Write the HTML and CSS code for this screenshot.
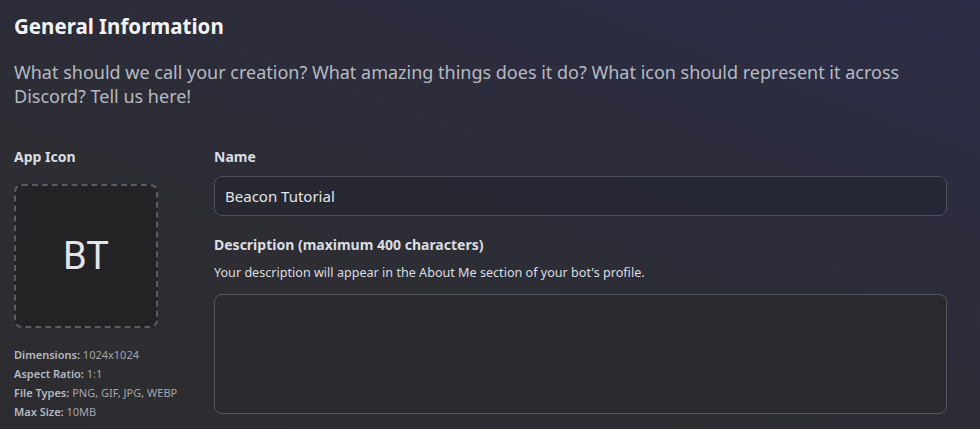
FILE: index.html
```html
<!DOCTYPE html>
<html lang="en">
<head>
    <meta charset="UTF-8">
    <meta name="viewport" content="width=device-width, initial-scale=1.0">
    <title>General Information</title>
    <link rel="stylesheet" href="styles.css">
</head>
<body>
    <div class="page">
        <h1>General Information</h1>
        <p class="intro">What should we call your creation? What amazing things does it do? What icon should represent it across Discord? Tell us here!</p>

        <div class="form-row">
            <!-- App icon column -->
            <div class="icon-col">
                <label class="field-label icon-label">App Icon</label>
                <div class="icon-box">BT</div>
                <ul class="icon-specs">
                    <li><b>Dimensions:</b> 1024x1024</li>
                    <li><b>Aspect Ratio:</b> 1:1</li>
                    <li><b>File Types:</b> PNG, GIF, JPG, WEBP</li>
                    <li><b>Max Size:</b> 10MB</li>
                </ul>
            </div>

            <!-- Name / description column -->
            <div class="fields-col">
                <label class="field-label" for="name">Name</label>
                <input type="text" id="name" class="text-input" value="Beacon Tutorial">

                <label class="field-label desc-label" for="description">Description (maximum 400 characters)</label>
                <p class="hint">Your description will appear in the About Me section of your bot's profile.</p>
                <textarea id="description" class="text-area"></textarea>
            </div>
        </div>
    </div>
</body>
</html>
```
FILE: styles.css
```css
html, body {
    height: 100%;
}
body {
    margin: 0;
    font-family: "Noto Sans", "Open Sans", sans-serif;
    background: linear-gradient(200deg, #2c2c48 0%, #2c2c3c 35%, #2d2d33 65%, #2c2c30 100%);
    color: #dbdee1;
    overflow: hidden;
}
.page {
    padding: 10px 33px 0 14px;
}
h1 {
    margin: 0;
    font-size: 20.5px;
    line-height: 32px;
    font-weight: 700;
    color: #f2f3f5;
}
.intro {
    margin: 18px 0 0;
    font-size: 18px;
    line-height: 24px;
    color: #b5bac1;
}
.form-row {
    display: flex;
    gap: 56px;
    margin-top: 40px;
}
.icon-col {
    width: 144px;
    flex-shrink: 0;
}
.fields-col {
    flex: 1;
    display: flex;
    flex-direction: column;
}
.field-label {
    display: block;
    font-size: 14px;
    line-height: 18px;
    font-weight: 700;
    color: #dbdee1;
    margin-bottom: 10px;
}
.icon-label {
    margin-bottom: 18px;
}
.icon-box {
    box-sizing: border-box;
    width: 144px;
    height: 144px;
    border: 2px dashed #5a5b63;
    border-radius: 8px;
    background: #232326;
    display: flex;
    align-items: center;
    justify-content: center;
    font-family: Roboto, "Liberation Sans", sans-serif;
    font-size: 38px;
    color: #e3e5e8;
}
.icon-specs {
    list-style: none;
    margin: 17px 0 0;
    padding: 0;
    font-size: 11px;
    line-height: 19px;
    color: #a3a6ad;
    white-space: nowrap;
}
.icon-specs b {
    font-weight: 600;
    color: #b5bac1;
}
.text-input {
    box-sizing: border-box;
    width: 100%;
    height: 40px;
    padding: 0 10px;
    border: 1px solid #4e4f58;
    border-radius: 8px;
    background: rgba(30, 31, 40, 0.35);
    font-family: inherit;
    font-size: 15px;
    color: #e3e5e8;
    outline: none;
}
.desc-label {
    margin-top: 20px;
    margin-bottom: 11px;
}
.hint {
    margin: 0 0 13px;
    font-size: 12.6px;
    line-height: 16px;
    color: #dbdee1;
}
.text-area {
    box-sizing: border-box;
    width: 100%;
    height: 120px;
    border: 1px solid #55565e;
    border-radius: 8px;
    background: #2b2b2f;
    resize: none;
    outline: none;
}
```
